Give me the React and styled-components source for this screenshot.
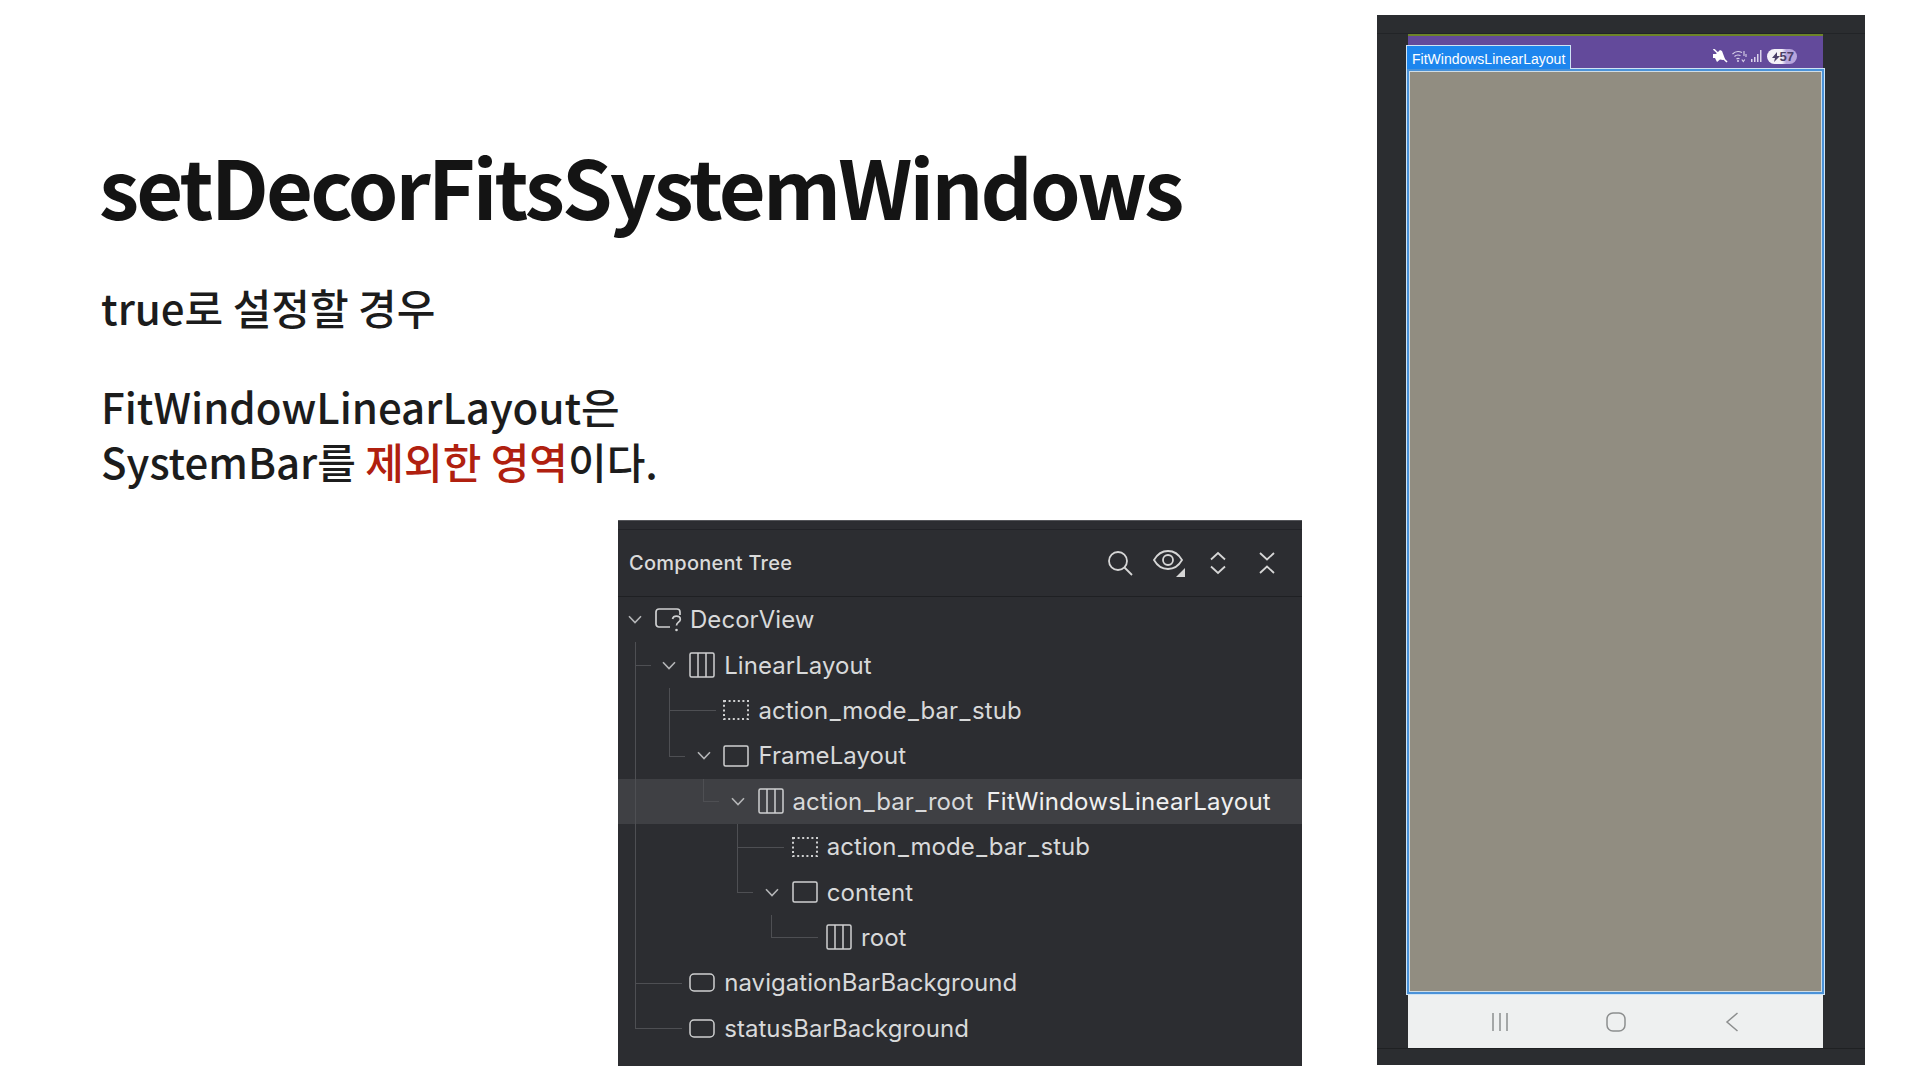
import React from "react";
import styled, { createGlobalStyle } from "styled-components";

const GlobalStyle = createGlobalStyle`
  html, body {
    margin: 0;
    padding: 0;
    background: #fff;
  }
`;

const Slide = styled.div`
  width: 1920px;
  height: 1080px;
  overflow: hidden;
  display: flex;
  justify-content: space-between;
  padding-right: 55px;
  box-sizing: border-box;
  font-family: "Noto Sans CJK KR", "Noto Sans", sans-serif;
`;

const LeftColumn = styled.div`
  width: 1302px;
  display: flex;
  flex-direction: column;
  padding: 135px 0 0 100px;
  box-sizing: border-box;
`;

const Title = styled.h1`
  margin: 0 0 44px -1px;
  font-size: 81px;
  line-height: 100px;
  letter-spacing: -2.8px;
  font-weight: 700;
  color: #141414;
  white-space: nowrap;
`;

const Body = styled.p`
  margin: 0 0 44px;
  padding-left: 1px;
  font-size: 42px;
  line-height: 55px;
  font-weight: 500;
  color: #1c1c1c;
  white-space: nowrap;
`;

const Red = styled.span`
  color: #b0200f;
`;

const TreePanel = styled.div`
  align-self: flex-end;
  width: 684px;
  height: 546px;
  margin-top: -12px;
  background: #2c2d31;
  border-top: 1px solid #55565a;
  box-sizing: border-box;
`;

const TopStrip = styled.div`
  height: 8px;
  border-bottom: 1px solid #222327;
`;

const TreeHeader = styled.div`
  height: 66px;
  display: flex;
  align-items: center;
  justify-content: space-between;
  padding: 0 11px 0 11px;
  border-bottom: 1px solid #1f2023;
  color: #dadada;
  font-family: Inter, sans-serif;
  font-size: 20px;
  font-weight: 500;
  letter-spacing: 0.25px;
`;

const HeaderIcons = styled.div`
  display: flex;
  align-items: center;
`;

const HeaderIcon = styled.span`
  width: 49px;
  height: 36px;
  display: flex;
  align-items: center;
  justify-content: center;
`;

const Row = styled.div`
  position: relative;
  height: 45.4px;
  display: flex;
  align-items: center;
  padding-left: ${(p) => 0.5 + p.$depth * 34.2}px;
  background: ${(p) => (p.$selected ? "#3f4044" : "transparent")};
  font-family: Inter, sans-serif;
  font-size: 24px;
  letter-spacing: 0.05px;
  color: #d8d9da;
  white-space: nowrap;
`;

const ChevronSlot = styled.span`
  width: 36.5px;
  padding-right: 3px;
  box-sizing: border-box;
  flex: none;
  display: flex;
  justify-content: center;
`;

const NodeIcon = styled.span`
  width: 28px;
  margin-right: 7px;
  flex: none;
  display: flex;
  align-items: center;
`;

const NodeName = styled.span`
  display: inline-flex;
`;

const Underscore = styled.span`
  padding: 0 1.5px;
`;

const NodeType = styled.span`
  margin-left: 13px;
  letter-spacing: 0.25px;
  color: #f0f0f0;
`;

const VLine = styled.i`
  position: absolute;
  left: ${(p) => 16.5 + p.$col * 34.2}px;
  top: 0;
  width: 1px;
  height: ${(p) => (p.$half ? "50%" : "100%")};
  background: #4e4f53;
`;

const HLine = styled.i`
  position: absolute;
  left: ${(p) => 16.5 + p.$col * 34.2}px;
  top: 50%;
  width: ${(p) => (p.$short ? 16 : 47)}px;
  height: 1px;
  background: #4e4f53;
`;

const PhonePanel = styled.div`
  width: 488px;
  height: 1050px;
  margin-top: 15px;
  padding: 18px 0 16px;
  box-sizing: border-box;
  background: #2b2d30;
  display: flex;
`;

const PhoneTrack = styled.div`
  flex: 1;
  display: flex;
  flex-direction: column;
  padding: 0 42px 0 31px;
  border-top: 1px solid #222427;
  border-bottom: 1px solid #1f2123;
`;

const StatusBar = styled.div`
  height: 34px;
  background: #634a9b;
  border-top: 2px solid #6d8428;
  display: flex;
  align-items: center;
  justify-content: flex-end;
  gap: 4px;
  padding: 8px 26px 0 0;
  box-sizing: border-box;
  flex: none;
`;

const Selection = styled.div`
  position: relative;
  flex: 1;
  margin: 0 -2px;
  background: #918d81;
  border: 1px solid #cfe4f4;
  box-shadow: inset 0 0 0 2px #4a92d8, inset 0 0 0 3px #cfdde6;
`;

const SelectionTab = styled.div`
  position: absolute;
  left: -1px;
  top: -24px;
  width: 165px;
  height: 24px;
  box-sizing: border-box;
  padding-left: 5px;
  background: #1d86ee;
  border: 1px solid #cfe4f4;
  border-bottom: none;
  color: #fff;
  font-family: "Liberation Sans", Arial, sans-serif;
  font-size: 14px;
  line-height: 26px;
`;

const NavBar = styled.div`
  height: 53px;
  flex: none;
  background: #eef0f0;
  display: grid;
  grid-template-columns: repeat(3, 116px);
  justify-content: center;
  justify-items: center;
  align-items: center;
`;

const Battery = styled.span`
  width: 30px;
  height: 15px;
  border-radius: 8px;
  background: linear-gradient(90deg, #f4f2f8 0 50%, #b7a5dc 64% 100%);
  display: flex;
  align-items: center;
  justify-content: flex-end;
  padding-right: 3px;
  box-sizing: border-box;
  position: relative;
  color: #4a3f68;
  font-family: "Liberation Sans", Arial, sans-serif;
  font-size: 13px;
  font-weight: 700;
`;

const Bolt = styled.svg`
  position: absolute;
  left: 5px;
  top: 3px;
`;

const SearchIcon = () => (
  <svg width="26" height="26" viewBox="0 0 26 26" fill="none" stroke="#d6d6d6" strokeWidth="1.8">
    <circle cx="11" cy="11" r="9" />
    <path d="M17.5 17.5 25 25" />
  </svg>
);

const EyeIcon = () => (
  <svg width="34" height="30" viewBox="0 0 34 30" fill="none" stroke="#d6d6d6" strokeWidth="1.8">
    <path d="M2 12C6 5 11 3 16 3s10 2 14 9c-4 7-9 9-14 9S6 19 2 12Z" />
    <circle cx="16" cy="12" r="5" />
    <path d="M33 20v9h-9Z" fill="#d6d6d6" stroke="none" />
  </svg>
);

const ExpandIcon = () => (
  <svg width="18" height="24" viewBox="0 0 18 24" fill="none" stroke="#d6d6d6" strokeWidth="1.8">
    <path d="M2 8.5 9 2l7 6.5M2 15.5 9 22l7-6.5" />
  </svg>
);

const CollapseIcon = () => (
  <svg width="18" height="24" viewBox="0 0 18 24" fill="none" stroke="#d6d6d6" strokeWidth="1.8">
    <path d="M2 2l7 6.5L16 2M2 22l7-6.5L16 22" />
  </svg>
);

const Chevron = () => (
  <svg width="14" height="9" viewBox="0 0 14 9" fill="none" stroke="#b4b5b7" strokeWidth="1.6">
    <path d="M1 1.2 7 7.5l6-6.3" />
  </svg>
);

const LinearIcon = () => (
  <svg width="26" height="26" viewBox="0 0 26 26" fill="none" stroke="#cfd0d1" strokeWidth="1.5">
    <rect x="1" y="1" width="24" height="24" rx="1.5" />
    <path d="M9 1v24M17 1v24" />
  </svg>
);

const FrameIcon = () => (
  <svg width="26" height="22" viewBox="0 0 26 22" fill="none" stroke="#cfd0d1" strokeWidth="1.5">
    <rect x="1" y="1" width="24" height="20" rx="1.5" />
  </svg>
);

const BarIcon = () => (
  <svg width="26" height="19" viewBox="0 0 26 19" fill="none" stroke="#cfd0d1" strokeWidth="1.5">
    <rect x="1" y="1" width="24" height="17" rx="4" />
  </svg>
);

const StubIcon = () => (
  <svg width="26" height="20" viewBox="0 0 26 20" fill="none" stroke="#cfd0d1" strokeWidth="2" strokeDasharray="2 2.6">
    <rect x="1" y="1" width="24" height="18" />
  </svg>
);

const UnknownIcon = () => (
  <svg width="28" height="26" viewBox="0 0 28 26" fill="none" stroke="#cfd0d1" strokeWidth="1.7">
    <path d="M15 20H4a3 3 0 0 1-3-3V5a3 3 0 0 1 3-3h18a3 3 0 0 1 3 3v3" />
    <path d="M17.5 12c.5-1.8 2-2.800 3.800-2.800s4 1 4 3.200c0 2.800-3.800 2.800-3.800 6.100" />
    <circle cx="21.5" cy="23" r="1.3" fill="#cfd0d1" stroke="none" />
  </svg>
);

const MuteIcon = () => (
  <svg width="16" height="14" viewBox="0 0 16 14">
    <path d="M1 5h3l4-4 2 1 3 8-2 1-3-.5L5 13 3 9H1Z" fill="#fff" />
    <path d="M1.5 0 15 13" stroke="#fff" strokeWidth="1.6" />
  </svg>
);

const WifiIcon = () => (
  <svg width="15" height="13" viewBox="0 0 15 13" fill="none" stroke="#d9d2ea" strokeWidth="1.1">
    <path d="M.5 4C3 1.5 7 1 10 2.500M2.500 6.500C4 5 6.500 4.800 8.500 5.500M4.500 9C5.500 8.200 6.500 8.200 7.500 8.800" />
    <circle cx="6" cy="11" r="1" fill="#d9d2ea" stroke="none" />
    <path d="M12 1v5M9.800 9.500l1.500 2 1.500-2M14 4v3" />
  </svg>
);

const SignalIcon = () => (
  <svg width="12" height="12" viewBox="0 0 12 12" fill="#d9d2ea">
    <rect x="0" y="9" width="1.5" height="3" />
    <rect x="3" y="7" width="1.5" height="5" />
    <rect x="6" y="4" width="1.5" height="8" />
    <rect x="9" y="0" width="1.5" height="12" />
  </svg>
);

const RecentsIcon = () => (
  <svg width="18" height="18" viewBox="0 0 18 18" fill="none" stroke="#8c8e8e" strokeWidth="1.5">
    <path d="M2 0v18M9 0v18M16 0v18" />
  </svg>
);

const HomeIcon = () => (
  <svg width="20" height="20" viewBox="0 0 20 20" fill="none" stroke="#8c8e8e" strokeWidth="1.5">
    <rect x="1" y="1" width="18" height="18" rx="6" />
  </svg>
);

const BackIcon = () => (
  <svg width="14" height="20" viewBox="0 0 14 20" fill="none" stroke="#8c8e8e" strokeWidth="1.5">
    <path d="M12.5 1 2 10l10.500 9" />
  </svg>
);

const rows = [
  { name: "DecorView", depth: 0, open: true, icon: UnknownIcon },
  { name: "LinearLayout", depth: 1, open: true, icon: LinearIcon, col: 0 },
  { name: "action_mode_bar_stub", depth: 2, icon: StubIcon, col: 1, pass: [0] },
  { name: "FrameLayout", depth: 2, open: true, icon: FrameIcon, col: 1, last: true, pass: [0] },
  { name: "action_bar_root", type: "FitWindowsLinearLayout", depth: 3, open: true, icon: LinearIcon, col: 2, last: true, pass: [0], selected: true },
  { name: "action_mode_bar_stub", depth: 4, icon: StubIcon, col: 3, pass: [0] },
  { name: "content", depth: 4, open: true, icon: FrameIcon, col: 3, last: true, pass: [0] },
  { name: "root", depth: 5, icon: LinearIcon, col: 4, last: true, pass: [0] },
  { name: "navigationBarBackground", depth: 1, icon: BarIcon, col: 0 },
  { name: "statusBarBackground", depth: 1, icon: BarIcon, col: 0, last: true },
];

function TreeRow({ row }) {
  const Icon = row.icon;
  const parts = row.name.split("_");
  return (
    <Row $depth={row.depth} $selected={row.selected}>
      {(row.pass || []).map((c) => (
        <VLine key={c} $col={c} />
      ))}
      {row.col !== undefined && (
        <>
          <VLine $col={row.col} $half={row.last} />
          <HLine $col={row.col} $short={row.open} />
        </>
      )}
      <ChevronSlot>{row.open && <Chevron />}</ChevronSlot>
      <NodeIcon>
        <Icon />
      </NodeIcon>
      <NodeName>
        {parts.map((part, i) => (
          <React.Fragment key={i}>
            {i > 0 && <Underscore>_</Underscore>}
            {part}
          </React.Fragment>
        ))}
      </NodeName>
      {row.type && <NodeType>{row.type}</NodeType>}
    </Row>
  );
}

export default function App() {
  return (
    <Slide>
      <GlobalStyle />
      <LeftColumn>
        <Title>setDecorFitsSystemWindows</Title>
        <Body>true로 설정할 경우</Body>
        <Body>
          FitWindowLinearLayout은
          <br />
          SystemBar를 <Red>제외한 영역</Red>이다.
        </Body>
        <TreePanel>
          <TopStrip />
          <TreeHeader>
            Component Tree
            <HeaderIcons>
              <HeaderIcon>
                <SearchIcon />
              </HeaderIcon>
              <HeaderIcon>
                <EyeIcon />
              </HeaderIcon>
              <HeaderIcon>
                <ExpandIcon />
              </HeaderIcon>
              <HeaderIcon>
                <CollapseIcon />
              </HeaderIcon>
            </HeaderIcons>
          </TreeHeader>
          {rows.map((row, i) => (
            <TreeRow key={i} row={row} />
          ))}
        </TreePanel>
      </LeftColumn>
      <PhonePanel>
        <PhoneTrack>
          <StatusBar>
            <MuteIcon />
            <WifiIcon />
            <SignalIcon />
            <Battery>
              <Bolt width="8" height="10" viewBox="0 0 8 10" fill="#4a3f68">
                <path d="M5 0 0 6h3L2 10l6-6H5Z" />
              </Bolt>
              57
            </Battery>
          </StatusBar>
          <Selection>
            <SelectionTab>FitWindowsLinearLayout</SelectionTab>
          </Selection>
          <NavBar>
            <RecentsIcon />
            <HomeIcon />
            <BackIcon />
          </NavBar>
        </PhoneTrack>
      </PhonePanel>
    </Slide>
  );
}
